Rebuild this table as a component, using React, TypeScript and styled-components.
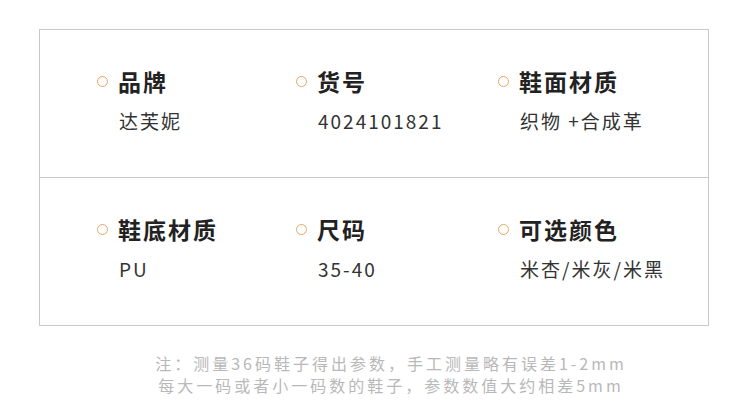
import styled, { createGlobalStyle } from 'styled-components';

const GlobalStyle = createGlobalStyle`
  html, body {
    margin: 0;
    padding: 0;
    background: #ffffff;
  }
  body {
    font-family: "Noto Sans CJK SC", "Noto Sans", sans-serif;
  }
`;

interface Spec {
  label: string;
  value: string;
}

const rows: Spec[][] = [
  [
    { label: '品牌', value: '达芙妮' },
    { label: '货号', value: '4024101821' },
    { label: '鞋面材质', value: '织物 +合成革' },
  ],
  [
    { label: '鞋底材质', value: 'PU' },
    { label: '尺码', value: '35-40' },
    { label: '可选颜色', value: '米杏/米灰/米黑' },
  ],
];

export default function App() {
  return (
    <>
      <GlobalStyle />
      <Page>
        <Table>
          {rows.map((row, i) => (
            <Row key={i} last={i === rows.length - 1}>
              {row.map((spec) => (
                <Cell key={spec.label}>
                  <Label>
                    <Dot />
                    {spec.label}
                  </Label>
                  <Value>{spec.value}</Value>
                </Cell>
              ))}
            </Row>
          ))}
        </Table>
        <Note>
          <p>注：测量36码鞋子得出参数，手工测量略有误差1-2mm</p>
          <p>每大一码或者小一码数的鞋子，参数数值大约相差5mm</p>
        </Note>
      </Page>
    </>
  );
}

const Page = styled.div`
  width: 750px;
  height: 420px;
  padding: 29px 0 0 39px;
  box-sizing: border-box;
`;

const Table = styled.div`
  width: 670px;
  box-sizing: border-box;
  border: 1px solid #c9c9c9;
`;

const Row = styled.div<{ last: boolean }>`
  display: grid;
  grid-template-columns: 199px 202px 1fr;
  height: ${({ last }) => (last ? '147px' : '148px')};
  padding: 36px 0 0 57px;
  box-sizing: border-box;
  border-bottom: ${({ last }) => (last ? 'none' : '1px solid #c9c9c9')};
`;

const Cell = styled.div`
  display: flex;
  flex-direction: column;
`;

const Label = styled.div`
  display: flex;
  align-items: center;
  font-size: 23px;
  line-height: 30px;
  font-weight: 700;
  letter-spacing: 2px;
  color: #222222;
`;

const Dot = styled.span`
  width: 9px;
  height: 9px;
  border: 1.5px solid #e3a868;
  border-radius: 50%;
  margin-right: 10px;
  flex-shrink: 0;
`;

const Value = styled.div`
  margin-top: 10px;
  padding-left: 22px;
  font-size: 19px;
  line-height: 30px;
  letter-spacing: 2px;
  color: #333333;
`;

const Note = styled.div`
  width: 750px;
  margin-left: -39px;
  margin-top: 26px;
  padding-left: 32px;
  box-sizing: border-box;
  text-align: center;
  font-size: 16px;
  line-height: 22px;
  letter-spacing: 3px;
  color: #b8b8b8;

  p {
    margin: 0;
  }
`;
